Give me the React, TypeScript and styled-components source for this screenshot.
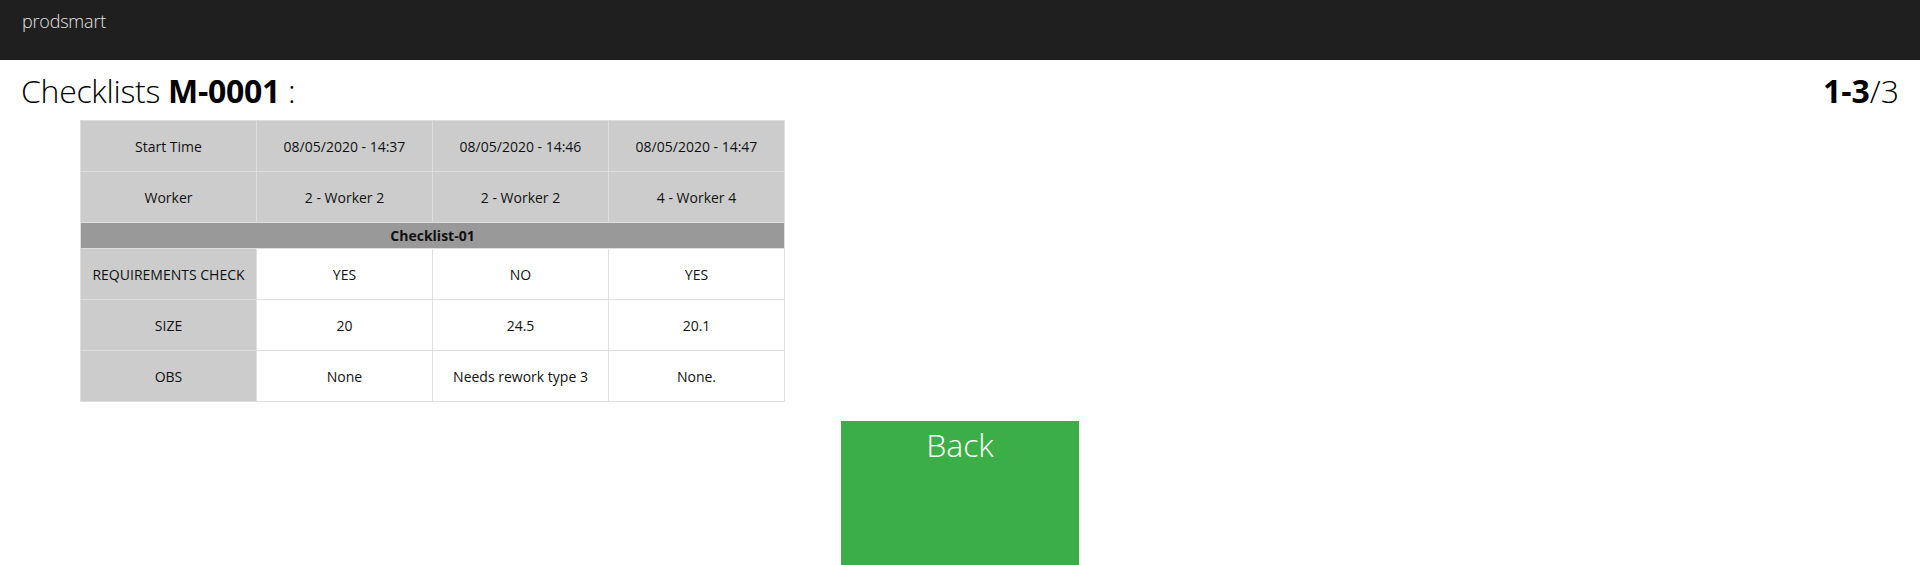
import React from "react";
import styled, { createGlobalStyle } from "styled-components";

const Global = createGlobalStyle`
  html, body { margin: 0; padding: 0; background: #fff; }
  body { font-family: "Open Sans", "Liberation Sans", sans-serif; color: #111; }
`;

const TopBar = styled.header`
  height: 60px;
  background: #1f1f1f;
  display: flex;
  align-items: center;
  padding: 0 22px;
  box-sizing: border-box;
`;

const Brand = styled.span`
  font-family: "Open Sans", "Liberation Sans", sans-serif;
  font-weight: 300;
  font-size: 18px;
  color: #e2e2e2;
  margin-top: -18px;
  letter-spacing: -0.2px;
`;

const TitleRow = styled.div`
  height: 60px;
  display: flex;
  align-items: center;
  justify-content: space-between;
  padding: 0 21px;
  font-size: 32px;
  font-weight: 300;
  color: #000;
`;

const Title = styled.h1`
  margin: 0;
  font-size: inherit;
  font-weight: 300;
  letter-spacing: -0.3px;
`;

const Strong = styled.b`
  font-weight: 700;
`;

const Pager = styled.span`
  font-weight: 300;
`;

const TableWrap = styled.div`
  padding-left: 80px;
`;

const Table = styled.table`
  border-collapse: collapse;
  table-layout: fixed;
  width: 704px;
  font-size: 14px;
  color: #111;
`;

const Cell = styled.td<{ $tone: "head" | "label" | "value" }>`
  width: 176px;
  height: 51px;
  padding: 0 4px;
  box-sizing: border-box;
  text-align: center;
  vertical-align: middle;
  border: 1px solid #dedede;
  background: ${(p) => (p.$tone === "value" ? "#ffffff" : "#cccccc")};
`;

const SectionCell = styled.td`
  height: 26px;
  padding: 0;
  box-sizing: border-box;
  text-align: center;
  vertical-align: middle;
  font-weight: 700;
  background: #999999;
  border: 1px solid #dedede;
`;

const ButtonRow = styled.div`
  display: flex;
  justify-content: center;
  padding-top: 19px;
`;

const BackButton = styled.button`
  width: 238px;
  height: 150px;
  background: #3cae48;
  border: none;
  color: #fff;
  font-family: "Open Sans", "Liberation Sans", sans-serif;
  font-weight: 300;
  font-size: 32px;
  display: flex;
  justify-content: center;
  align-items: flex-start;
  padding: 2px 0 0;
  cursor: pointer;
`;

const headers = [
  ["Start Time", "08/05/2020 - 14:37", "08/05/2020 - 14:46", "08/05/2020 - 14:47"],
  ["Worker", "2 - Worker 2", "2 - Worker 2", "4 - Worker 4"],
];

const rows = [
  ["REQUIREMENTS CHECK", "YES", "NO", "YES"],
  ["SIZE", "20", "24.5", "20.1"],
  ["OBS", "None", "Needs rework type 3", "None."],
];

export default function App() {
  return (
    <>
      <Global />
      <TopBar>
        <Brand>prodsmart</Brand>
      </TopBar>
      <TitleRow>
        <Title>
          Checklists <Strong>M-0001</Strong> :
        </Title>
        <Pager>
          <Strong>1-3</Strong>/3
        </Pager>
      </TitleRow>
      <TableWrap>
        <Table>
          <tbody>
            {headers.map((r, i) => (
              <tr key={"h" + i}>
                {r.map((c, j) => (
                  <Cell key={j} $tone="head">
                    {c}
                  </Cell>
                ))}
              </tr>
            ))}
            <tr>
              <SectionCell colSpan={4}>Checklist-01</SectionCell>
            </tr>
            {rows.map((r, i) => (
              <tr key={"r" + i}>
                {r.map((c, j) => (
                  <Cell key={j} $tone={j === 0 ? "label" : "value"}>
                    {c}
                  </Cell>
                ))}
              </tr>
            ))}
          </tbody>
        </Table>
      </TableWrap>
      <ButtonRow>
        <BackButton>Back</BackButton>
      </ButtonRow>
    </>
  );
}
